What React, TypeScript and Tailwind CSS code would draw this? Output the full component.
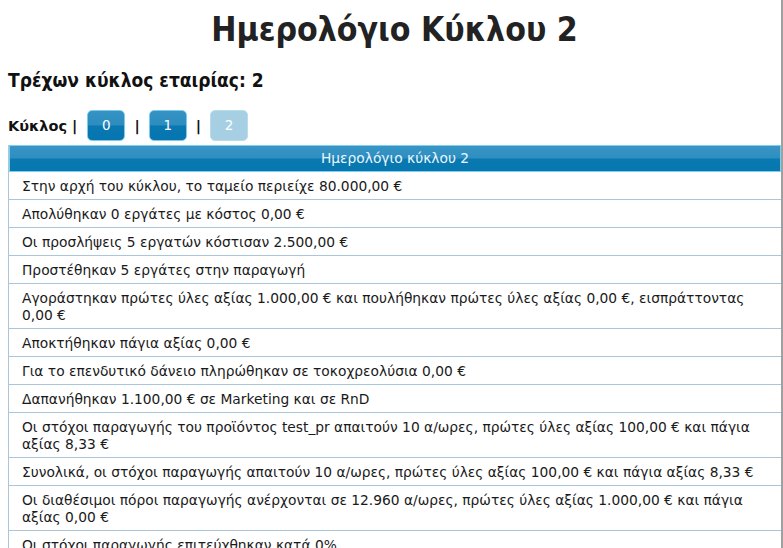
const rows: string[] = [
  "Στην αρχή του κύκλου, το ταμείο περιείχε 80.000,00 €",
  "Απολύθηκαν 0 εργάτες με κόστος 0,00 €",
  "Οι προσλήψεις 5 εργατών κόστισαν 2.500,00 €",
  "Προστέθηκαν 5 εργάτες στην παραγωγή",
  "Αγοράστηκαν πρώτες ύλες αξίας 1.000,00 € και πουλήθηκαν πρώτες ύλες αξίας 0,00 €, εισπράττοντας 0,00 €",
  "Αποκτήθηκαν πάγια αξίας 0,00 €",
  "Για το επενδυτικό δάνειο πληρώθηκαν σε τοκοχρεολύσια 0,00 €",
  "Δαπανήθηκαν 1.100,00 € σε Marketing και σε RnD",
  "Οι στόχοι παραγωγής του προϊόντος test_pr απαιτούν 10 α/ωρες, πρώτες ύλες αξίας 100,00 € και πάγια αξίας 8,33 €",
  "Συνολικά, οι στόχοι παραγωγής απαιτούν 10 α/ωρες, πρώτες ύλες αξίας 100,00 € και πάγια αξίας 8,33 €",
  "Οι διαθέσιμοι πόροι παραγωγής ανέρχονται σε 12.960 α/ωρες, πρώτες ύλες αξίας 1.000,00 € και πάγια αξίας 0,00 €",
  "Οι στόχοι παραγωγής επιτεύχθηκαν κατά 0%",
];

const CycleButton = ({ n, current }: { n: number; current?: boolean }) => (
  <button
    className={
      current
        ? "h-[31px] w-[38px] rounded-[5px] border border-[#b9dcec] bg-[#a7cfe4] text-[13.5px] font-normal text-white"
        : "h-[31px] w-[38px] rounded-[5px] border border-[#7ccbeb] bg-[linear-gradient(to_bottom,#3593c3_0%,#2c8dbf_48%,#0a77b0_52%,#0576b0_100%)] text-[13.5px] font-normal text-white"
    }
  >
    {n}
  </button>
);

export default function App() {
  return (
    <div className="h-[548px] w-[783px] overflow-hidden border-r-2 border-[#a0a0a0] bg-white font-['DejaVu_Sans',sans-serif] text-[#1a1a1a]">
      <div className="pl-2">
        <h1 className="pt-[11px] text-center font-['DejaVu_Sans_Condensed','DejaVu_Sans',sans-serif] text-[33.5px] font-bold leading-[38px] text-[#222]">
          Ημερολόγιο Κύκλου 2
        </h1>
        <h3 className="mt-[20px] font-['DejaVu_Sans_Condensed','DejaVu_Sans',sans-serif] text-[19px] font-bold leading-[22px] text-[#111]">
          Τρέχων κύκλος εταιρίας: 2
        </h3>
        <div className="mt-[19px] flex items-center text-[14.5px] font-bold text-[#111]">
          <span className="mt-[3px]">Κύκλος |</span>
          <span className="ml-[10px]"><CycleButton n={0} /></span>
          <span className="mx-[9px] mt-[3px]">|</span>
          <CycleButton n={1} />
          <span className="mx-[9px] mt-[3px]">|</span>
          <CycleButton n={2} current />
        </div>
        <div className="mt-[4px] border-l border-[#a9c6dc]">
          <div className="h-[27px] border border-[#7fd0ef] bg-[linear-gradient(to_bottom,#3895c5_0%,#2f8fc1_48%,#0b79b1_52%,#0577b0_100%)] text-center text-[13.8px] leading-[25px] text-[#eaf6fc]">
            Ημερολόγιο κύκλου 2
          </div>
          {rows.map((r, i) => (
            <div key={i} className="border-b border-[#a9c6dc] px-[13px] pt-[6px] pb-[4px] text-[13.8px] leading-[17px]">
              {r}
            </div>
          ))}
        </div>
      </div>
    </div>
  );
}
